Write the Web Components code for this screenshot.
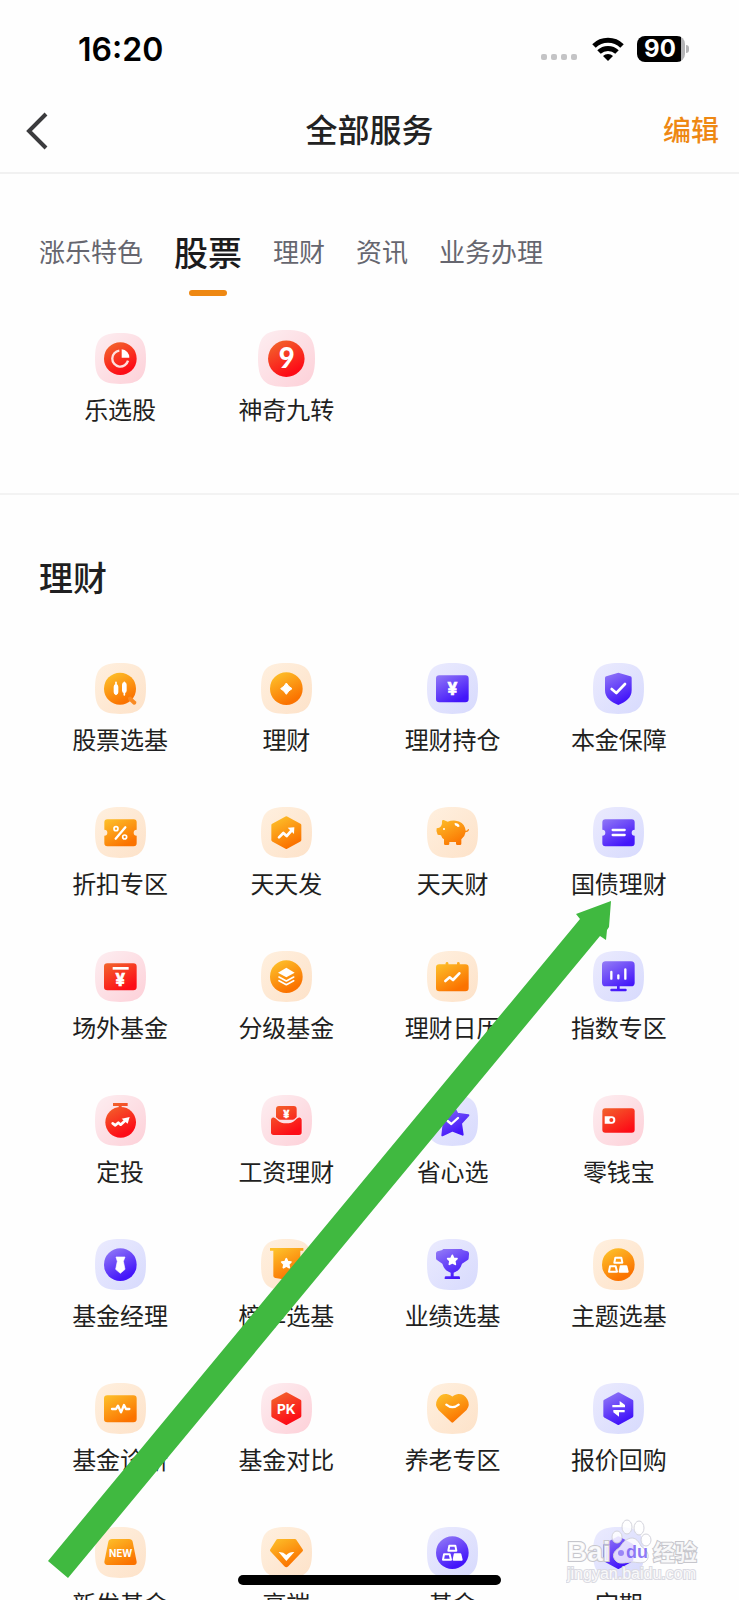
<!DOCTYPE html>
<html lang="zh-CN">
<head>
<meta charset="utf-8">
<meta name="viewport" content="width=device-width, initial-scale=1">
<title>全部服务</title>
<style>
  html, body { margin: 0; height: 100%; }
  body {
    background: #fefefe;
    color: #1f1f21;
    font-family: Inter, "Noto Sans CJK SC", sans-serif;
    overflow: hidden;
  }
</style>
</head>
<body>
<services-app></services-app>

<template id="t-app">
  <style>
    :host { display: block; position: relative; height: 100vh; overflow: hidden; }
  </style>
  <status-bar time="16:20" level="90"></status-bar>
  <title-bar>全部服务</title-bar>
  <main>
    <service-section>
      <category-tabs slot="head"></category-tabs>
      <service-item icon="pie" tone="red">乐选股</service-item>
      <service-item icon="nine" tone="red" large>神奇九转</service-item>
    </service-section>
    <service-section heading="理财">
      <service-item icon="candles" tone="orange">股票选基</service-item>
      <service-item icon="coin" tone="orange">理财</service-item>
      <service-item icon="yencard" tone="purple">理财持仓</service-item>
      <service-item icon="shield" tone="purple">本金保障</service-item>
      <service-item icon="coupon" tone="orange">折扣专区</service-item>
      <service-item icon="trend" tone="orange">天天发</service-item>
      <service-item icon="pig" tone="orange">天天财</service-item>
      <service-item icon="bond" tone="purple">国债理财</service-item>
      <service-item icon="otc" tone="red">场外基金</service-item>
      <service-item icon="layers" tone="orange">分级基金</service-item>
      <service-item icon="calendar" tone="orange">理财日历</service-item>
      <service-item icon="monitor" tone="purple">指数专区</service-item>
      <service-item icon="timer" tone="red">定投</service-item>
      <service-item icon="salary" tone="red">工资理财</service-item>
      <service-item icon="star" tone="purple">省心选</service-item>
      <service-item icon="wallet" tone="red">零钱宝</service-item>
      <service-item icon="tie" tone="purple">基金经理</service-item>
      <service-item icon="banner" tone="orange">榜单选基</service-item>
      <service-item icon="trophy" tone="purple">业绩选基</service-item>
      <service-item icon="blocks" tone="orange">主题选基</service-item>
      <service-item icon="pulse" tone="orange">基金诊断</service-item>
      <service-item icon="pk" tone="red">基金对比</service-item>
      <service-item icon="heart" tone="orange">养老专区</service-item>
      <service-item icon="swap" tone="purple">报价回购</service-item>
      <service-item icon="fresh" tone="orange">新发基金</service-item>
      <service-item icon="gem" tone="orange">高端</service-item>
      <service-item icon="blocks" tone="purple">基金</service-item>
      <service-item icon="term" tone="purple">定期</service-item>
    </service-section>
  </main>
  <guide-arrow></guide-arrow>
  <home-indicator></home-indicator>
  <source-mark></source-mark>
</template>

<template id="t-status">
  <style>
    :host { display: flex; align-items: center; justify-content: space-between; height: 98px; padding: 0 50px 0 78px; box-sizing: border-box; color: #000; }
    time { padding-top: 2px; font-size: 32px; line-height: 40px; font-weight: 600; }
    .right { display: flex; align-items: center; }
    .dots { display: flex; gap: 4px; margin: 16px 15px 0 0; }
    .dots i { width: 6px; height: 6px; border-radius: 2px; background: #c4c4c6; }
    .wifi { width: 32px; height: 24px; margin-right: 13px; }
    .battery { display: flex; align-items: center; gap: 1px; }
    .cell { width: 48px; height: 26px; border-radius: 8px; background: linear-gradient(90deg, #000 44px, #b4b4b6 44px); color: #fff; font-size: 24px; line-height: 26px; font-weight: 700; text-align: center; box-sizing: border-box; padding-right: 2px; }
    .nub { width: 3px; height: 8px; border-radius: 0 4px 4px 0; background: #b4b4b6; }
  </style>
  <time></time>
  <div class="right">
    <span class="dots"><i></i><i></i><i></i><i></i></span>
    <svg class="wifi" viewBox="0 0 32 24" aria-hidden="true">
      <g fill="none" stroke="#000" stroke-width="5"><path d="M2 9a20 20 0 0 1 28 0"/><path d="M7 15a13 13 0 0 1 18 0"/></g>
      <path d="M11 19a7 7 0 0 1 10 0L16 24z"/>
    </svg>
    <span class="battery"><span class="cell"></span><span class="nub"></span></span>
  </div>
</template>

<template id="t-title">
  <style>
    :host { display: grid; grid-template-columns: 1fr auto 1fr; align-items: center; height: 76px; padding: 0 20px 8px; box-sizing: border-box; border-bottom: 2px solid #f1f1f1; }
    h1 { margin: 0; font-size: 32px; line-height: 48px; font-weight: 500; color: #222; }
    button { border: 0; padding: 0; background: none; font-family: inherit; }
    .back { justify-self: start; width: 32px; height: 40px; }
    .back svg { display: block; }
    .edit { justify-self: end; font-size: 28px; line-height: 40px; font-weight: 500; color: #ee8813; }
  </style>
  <button class="back" type="button" aria-label="返回">
    <svg width="32" height="40" viewBox="0 0 32 40" fill="none" stroke="#3b3b3d" stroke-width="4"><path d="M26 3 9 20l17 17"/></svg>
  </button>
  <h1><slot></slot></h1>
  <button class="edit" type="button">编辑</button>
</template>

<template id="t-tabs">
  <style>
    :host { display: block; padding: 55px 2px 37px; }
    nav { display: flex; gap: 31px; height: 67px; }
    a { display: block; position: relative; font-size: 26px; line-height: 48px; color: #66666f; text-decoration: none; white-space: nowrap; }
    a[aria-current] { font-size: 34px; line-height: 50px; font-weight: 500; color: #1b1b1d; }
    a[aria-current]::after { content: ""; position: absolute; left: 50%; bottom: 0; width: 38px; height: 6px; margin-left: -19px; border-radius: 3px; background: #ee8813; }
  </style>
  <nav aria-label="服务分类">
    <a href="#featured">涨乐特色</a>
    <a href="#stock" aria-current="true">股票</a>
    <a href="#wealth">理财</a>
    <a href="#news">资讯</a>
    <a href="#business">业务办理</a>
  </nav>
</template>

<template id="t-section">
  <style>
    :host { display: block; padding: 0 37px 66px; border-bottom: 2px solid #f3f3f3; }
    h2 { margin: 0; padding: 59px 2px; font-size: 34px; line-height: 50px; font-weight: 500; color: #1f1f21; }
    .grid { display: grid; grid-template-columns: repeat(4, 1fr); row-gap: 50px; }
  </style>
  <slot name="head"></slot>
  <div class="grid"><slot></slot></div>
</template>

<template id="t-item">
  <style>
    :host { display: block; min-width: 0; }
    a { display: flex; flex-direction: column; align-items: center; gap: 11px; color: inherit; text-decoration: none; }
    .box { display: flex; align-items: center; justify-content: center; height: 51px; }
    svg { flex: none; width: 51px; height: 51px; }
    :host([large]) svg { width: 57px; height: 57px; }
    .label { font-size: 24px; line-height: 32px; white-space: nowrap; }
    text { font-family: Inter, sans-serif; font-weight: 700; text-anchor: middle; }
    .nine { font-family: Lato, sans-serif; font-weight: 900; }
  </style>
  <a href="#service"><span class="box"></span><span class="label"><slot></slot></span></a>
</template>

<template id="t-arrow">
  <style>
    :host { display: block; position: absolute; left: 48px; top: 901px; pointer-events: none; }
    svg { display: block; }
  </style>
  <svg width="563" height="678" viewBox="0 0 563 678" aria-hidden="true"><path fill="#40b940" d="M563 0 528 13l4 5L0 660l20 17L552 35l6 4 1-10 2-3z"/></svg>
</template>

<template id="t-home">
  <style>
    :host { display: block; position: absolute; left: 50%; bottom: 15px; width: 263px; height: 10px; margin-left: -132px; border-radius: 5px; background: #000; }
  </style>
</template>

<template id="t-mark">
  <style>
    :host { display: block; position: absolute; right: 37px; bottom: 16px; }
    svg { display: block; }
    text { fill: #fff; fill-opacity: .85; stroke: #c6c6cc; stroke-width: 2; paint-order: stroke; }
    .logo { font: 700 28px "Liberation Sans", sans-serif; }
    .cn { font: 700 22px "Noto Sans CJK SC", sans-serif; }
    .url { font: 400 16px "Liberation Sans", sans-serif; stroke: #dadae2; }
    .du { font: 700 18px "Liberation Sans", sans-serif; fill: #6a4ff2; fill-opacity: .75; stroke: none; }
    .paw { fill: #fff; fill-opacity: .82; stroke: #d4d4dc; }
  </style>
  <svg width="136" height="66" viewBox="0 0 136 66">
    <text class="logo" x="1" y="43">Bai</text>
    <text class="cn" x="87" y="42">经验</text>
    <g class="paw">
      <ellipse cx="61" cy="9" rx="5" ry="7"/><ellipse cx="73" cy="10" rx="5" ry="7"/>
      <ellipse cx="51" cy="19" rx="5" ry="6"/><ellipse cx="80" cy="22" rx="5" ry="6"/>
      <path d="M62 21c6-3 10 1 13 7 5 4 8 7 7 12-2 6-8 5-15 4-7 0-13 3-17-1-5-5-2-10 3-13 3-3 4-7 9-9z"/>
    </g>
    <circle cx="55" cy="35" r="3" fill="#6a4ff2" fill-opacity=".6"/>
    <text class="du" x="60" y="40">du</text>
    <text class="url" x="1" y="61">jingyan.baidu.com</text>
  </svg>
</template>

<script>
const TONES = {
  orange: ['#fff0df', '#fde2c9', '#fdc02a', '#fb7300'],
  purple: ['#ebebfe', '#d7dafd', '#8f76f6', '#4315fa'],
  red:    ['#fdeef1', '#fdd0d8', '#f2642c', '#fd0c17']
};

/* Shared silhouettes, all on a 153-unit tile. */
const DISC = '<circle cx="76" cy="77" r="49"/>';
const CARD = '<rect x="27" y="37" width="98" height="81" rx="10"/>';
const HEX = '<path stroke-width="10" stroke-linejoin="round" d="M76 33 116 55V99L76 121 36 99V55Z" stroke="url(#g)"/>';
const TICKET = '<path d="M37 37h79q9 0 9 9v22a9 9 0 0 0 0 18v23q0 9-9 9H37q-9 0-9-9V86a9 9 0 0 0 0-18V46q0-9 9-9z"/>';
const line = (d, w = 8) => `<path fill="none" stroke="#fff" stroke-width="${w}" stroke-linecap="round" stroke-linejoin="round" d="${d}"/>`;
const yen = (y, size) => `<text x="76" y="${y}" font-size="${size}" fill="#fff" stroke="#fff" stroke-width="2">¥</text>`;
const smallStar = (y) => `<path fill="#fff" stroke="#fff" stroke-width="5" stroke-linejoin="round" transform="translate(76 ${y})" d="M0-14 4-5 14-4 7 3 9 13 0 8-9 13-7 3-14-4-4-5Z"/>`;
const BLOCKS = '<path fill="none" stroke="#fff" stroke-width="6" stroke-linejoin="round" d="M67 56h18l3 15H64zM51 82h17l4 16H48z"/><path fill="#fff" stroke="#fff" stroke-width="6" stroke-linejoin="round" d="M83 82h17l4 16H80z"/>';

const GLYPHS = {
  pie: DISC + '<path fill="none" stroke="#fff" stroke-opacity=".85" stroke-width="7" d="M73 53a24 24 0 1 0 26 30"/><path fill="#fff" d="M80 49a24 24 0 0 1 23 25H80z"/>',
  nine: DISC + '<text class="nine" x="77" y="103" font-size="74" fill="#fff">9</text>',
  candles: '<circle cx="75" cy="77" r="48"/><path fill="none" stroke="#f98a22" stroke-width="12" stroke-linecap="round" d="M105 107l13 12"/>' + line('M63 71v17M88 65v18', 14) + line('M63 58v36M88 58v38', 5),
  coin: DISC + '<path fill="#fff" stroke="#fff" stroke-width="3" stroke-linejoin="round" d="M76 60Q82 71 93 77 82 83 76 94 70 83 59 77 70 71 76 60Z"/>',
  yencard: CARD + yen(96, 52),
  shield: '<path d="M76 29l36 11q4 1 4 5v37c0 22-18 36-40 44-22-8-40-22-40-44V45q0-4 4-5z"/>' + line('M56 78l14 12 26-27'),
  coupon: TICKET + line('M62 95L91 61', 7) + '<g fill="none" stroke="#fff" stroke-width="5"><circle cx="63" cy="65" r="6"/><circle cx="89" cy="90" r="6"/></g>',
  trend: HEX + line('M54 91l13-13 10 9 16-18') + '<path fill="#fff" d="M80 62l20-1-1 20z"/>',
  pig: '<path d="M45 43q0-5 5-4l12 5q10-4 24-3 22 3 28 21l2 9q6 1 7-5l3 1q-1 9-10 8-2 13-13 22v13q0 4-4 4h-8q-4 0-4-4v-5H67v5q0 4-4 4h-8q-4 0-4-4V97q-7-4-9-12l-10-2q-6-9-3-19 9 0 13-6 4-5 3-15z"/><circle cx="51" cy="66" r="3" fill="#fff"/><path fill="#fff" d="M83 48q12 0 15 10-6 4-9-1-7-1-6-9z"/>',
  bond: TICKET + line('M59 69h36M59 84h36', 7),
  otc: CARD + '<path fill="#fff" d="M53 48h48v8H53z"/>' + yen(105, 50),
  layers: DISC + '<path fill="#fff" d="M76 50l25 15-25 14-25-14z"/>' + line('M54 78l22 12 22-12M54 89l22 12 22-12', 5),
  calendar: '<rect x="27" y="40" width="98" height="81" rx="10"/><rect x="56" y="33" width="8" height="14" rx="4"/><rect x="90" y="33" width="8" height="14" rx="4"/>' + line('M55 90l13-11 10 8 19-20'),
  monitor: '<rect x="27" y="31" width="98" height="75" rx="11"/><path d="M72 104h8v10h-8z"/><rect x="52" y="113" width="49" height="8" rx="3"/>' + line('M55 63v20M76 73v9M97 55v28', 7),
  timer: '<circle cx="77" cy="82" r="46"/><path d="M54 24h44v9H80v8h-9v-8H54z"/>' + line('M53 85l8 6 9-8 7 6 13-12') + '<path fill="#fff" d="M80 71l24-5-6 20z"/>',
  salary: '<path d="M54 33h44q9 0 9 9v32H45V42q0-9 9-9z"/><path stroke="#fddfe4" stroke-width="4" d="M28 74q1-8 10-9 8 4 13 9 10 9 25 9t25-9q5-5 13-9 9 1 10 9v38q0 10-10 10H38q-10 0-10-10z"/>' + yen(68, 30),
  star: '<path stroke="url(#g)" stroke-width="6" stroke-linejoin="round" d="M76 28l15 28 33 5-22 24 5 34-31-12-30 14 4-35-22-24 32-6z"/>' + line('M62 78l11 9 20-18', 7),
  wallet: '<rect x="28" y="40" width="97" height="73" rx="9"/><path fill="#fff" d="M35 64h21a11 11 0 0 1 0 22H35z"/><circle cx="55" cy="75" r="6"/>',
  tie: DISC + '<path fill="#fff" stroke="#fff" stroke-width="2" stroke-linejoin="round" d="M63 54h27l-5 13 5 24-14 12-14-12 5-24z"/>',
  banner: '<path d="M27 27h100v8h-9v76q0 5-6 6l-36 5-33-5q-6-1-6-6V35H27z"/>' + smallStar(73),
  trophy: '<path d="M46 33q1-3 4-3h53q3 0 4 3l11 3q9 1 8 10l-1 12q0 4-4 6l-16 10q-7 22-25 27v11h15q4 0 4 4v4H53v-4q0-4 4-4h14v-11q-18-5-25-27L31 64q-4-2-4-6V46q-1-9 8-10z"/>' + smallStar(63),
  blocks: DISC + BLOCKS,
  pulse: CARD + line('M51 78h12l6-10 9 20 9-22 6 12h10', 7),
  pk: HEX + '<text x="76" y="92" font-size="41" fill="#fff">PK</text>',
  heart: '<path stroke="url(#g)" stroke-width="8" stroke-linejoin="round" d="M76 115L37 78C23 61 38 36 58 37q11 1 18 10 7-9 18-10c20-1 35 24 22 41z"/>' + line('M58 65q18 15 37 0', 7),
  swap: HEX + '<path fill="#fff" d="M58 66h22V54l16 12v7H58zM95 81v7H78v13L61 88v-7z"/>',
  fresh: '<path d="M51 36h51q9 0 11 8l12 60q1 9-8 10H37q-9-1-9-10l12-60q2-8 11-8z"/><text x="77" y="89" font-size="29" fill="#fff">NEW</text>',
  gem: '<path stroke="url(#g)" stroke-width="8" stroke-linejoin="round" d="M50 40h52l20 30-43 45q-3 3-6 0L31 70z"/><path fill="#fff" d="M53 75q14-1 23 9 9-10 24-9L76 102z"/>',
  term: HEX
};

function iconSvg(name, tone) {
  const [t1, t2, g1, g2] = TONES[tone];
  return `<svg viewBox="0 0 153 153" aria-hidden="true">
    <defs>
      <linearGradient id="t" x1="0" y1="0" x2="1" y2="1"><stop stop-color="${t1}"/><stop offset="1" stop-color="${t2}"/></linearGradient>
      <linearGradient id="g" gradientUnits="userSpaceOnUse" x1="45" y1="30" x2="90" y2="115"><stop stop-color="${g1}"/><stop offset="1" stop-color="${g2}"/></linearGradient>
    </defs>
    <path fill="url(#t)" d="M0 76C0 18 18 0 76 0S153 18 153 76 135 153 76 153 0 135 0 76Z"/>
    <g fill="url(#g)">${GLYPHS[name]}</g>
  </svg>`;
}

class Base extends HTMLElement {
  constructor() {
    super();
    this.attachShadow({ mode: 'open' });
    this.shadowRoot.append(document.getElementById(this.constructor.template).content.cloneNode(true));
  }
}

customElements.define('status-bar', class extends Base {
  static template = 't-status';
  connectedCallback() {
    this.shadowRoot.querySelector('time').textContent = this.getAttribute('time');
    this.shadowRoot.querySelector('.cell').textContent = this.getAttribute('level');
  }
});
customElements.define('title-bar', class extends Base { static template = 't-title'; });
customElements.define('category-tabs', class extends Base { static template = 't-tabs'; });
customElements.define('service-item', class extends Base {
  static template = 't-item';
  connectedCallback() {
    this.shadowRoot.querySelector('.box').innerHTML = iconSvg(this.getAttribute('icon'), this.getAttribute('tone'));
  }
});
customElements.define('service-section', class extends Base {
  static template = 't-section';
  connectedCallback() {
    const heading = this.getAttribute('heading');
    if (!heading || this.shadowRoot.querySelector('h2')) return;
    const h2 = document.createElement('h2');
    h2.textContent = heading;
    this.shadowRoot.querySelector('.grid').before(h2);
  }
});
customElements.define('guide-arrow', class extends Base { static template = 't-arrow'; });
customElements.define('home-indicator', class extends Base { static template = 't-home'; });
customElements.define('source-mark', class extends Base { static template = 't-mark'; });
customElements.define('services-app', class extends Base { static template = 't-app'; });
</script>
</body>
</html>
